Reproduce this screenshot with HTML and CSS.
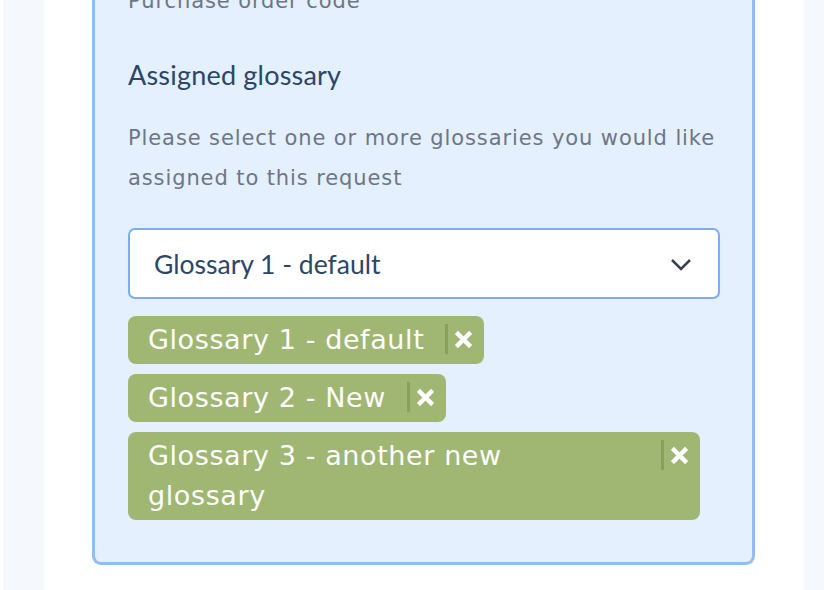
FILE: index.html
```html
<!DOCTYPE html>
<html lang="en">
<head>
  <meta charset="utf-8">
  <title>Assigned glossary</title>
  <link rel="stylesheet" href="styles.css">
</head>
<body>
  <div class="shell">
    <div class="panel">
      <div class="card">
        <p class="hint top">Purchase order code</p>

        <h2 class="label">Assigned glossary</h2>
        <p class="hint">Please select one or more glossaries you would like assigned to this request</p>

        <div class="select">
          <span class="select-value">Glossary 1 - default</span>
          <svg class="chevron" width="22" height="14" viewBox="0 0 22 14">
            <path d="M2 3 L11 12 L20 3" fill="none" stroke="#374151" stroke-width="2.5"/>
          </svg>
        </div>

        <div class="tags">
          <div class="tag">
            <span class="tag-text">Glossary 1 - default</span>
            <span class="tag-remove">
              <svg width="19" height="19" viewBox="0 0 20 20"><path d="M2.5 2.5 L17.5 17.5 M17.5 2.5 L2.5 17.5" stroke="#fff" stroke-width="4.5"/></svg>
            </span>
          </div>
          <div class="tag">
            <span class="tag-text">Glossary 2 - New</span>
            <span class="tag-remove">
              <svg width="19" height="19" viewBox="0 0 20 20"><path d="M2.5 2.5 L17.5 17.5 M17.5 2.5 L2.5 17.5" stroke="#fff" stroke-width="4.5"/></svg>
            </span>
          </div>
          <div class="tag tag-wide">
            <span class="tag-text">Glossary 3 - another new glossary</span>
            <span class="tag-remove">
              <svg width="19" height="19" viewBox="0 0 20 20"><path d="M2.5 2.5 L17.5 17.5 M17.5 2.5 L2.5 17.5" stroke="#fff" stroke-width="4.5"/></svg>
            </span>
          </div>
        </div>
      </div>
    </div>
  </div>
</body>
</html>
```

FILE: styles.css
```css
body {
  margin: 0;
  background-color: #fff;
  font-family: "DejaVu Sans", sans-serif;
  overflow: hidden;
}

.shell {
  margin-left: 3px;
  margin-top: -19px;
  min-height: calc(100vh + 19px);
  background-color: #f5f9fe;
  padding-left: 41px;
}

.panel {
  width: 760px;
  min-height: calc(100vh + 19px);
  background-color: #fff;
  padding: 0 49px 0 48px;
  box-sizing: border-box;
}

.card {
  background-color: #e4f0fd;
  border: 3px solid #92bcf6;
  border-top: 0;
  border-radius: 0 0 9px 9px;
  padding: 0 32px 42px 33px;
}

.hint {
  margin: 0;
  color: #6e7685;
  font-size: 21px;
  letter-spacing: 0.9px;
  line-height: 40px;
}

.top {
  margin-bottom: 38px;
}

.label {
  margin: 0 0 27px;
  font-family: Lato, sans-serif;
  font-weight: normal;
  font-size: 27px;
  letter-spacing: 0.2px;
  color: #2c4668;
  line-height: 32px;
}

.select {
  display: flex;
  align-items: center;
  justify-content: space-between;
  margin-top: 30px;
  height: 71px;
  box-sizing: border-box;
  padding: 0 26px 0 24px;
  background-color: #fff;
  border: 2px solid #7badf4;
  border-radius: 7px;
}

.select-value {
  font-family: Lato, sans-serif;
  font-size: 26.5px;
  color: #2c4668;
}

.tags {
  display: flex;
  flex-direction: column;
  align-items: flex-start;
  gap: 10px;
  margin-top: 17px;
}

.tag {
  display: flex;
  align-items: flex-start;
  max-width: 572px;
  box-sizing: border-box;
  padding: 4px 11px 4px 20px;
  background-color: #a0b673;
  border-radius: 8px;
  color: #fff;
}

.tag-wide {
  width: 572px;
}

.tag-text {
  max-width: 470px;
  font-size: 27px;
  letter-spacing: 0.6px;
  line-height: 40px;
  padding-right: 21px;
}

.tag-remove {
  display: flex;
  align-items: center;
  height: 30px;
  margin-top: 4px;
  margin-left: auto;
  padding-left: 6px;
  border-left: 3px solid #87a05c;
}
```
